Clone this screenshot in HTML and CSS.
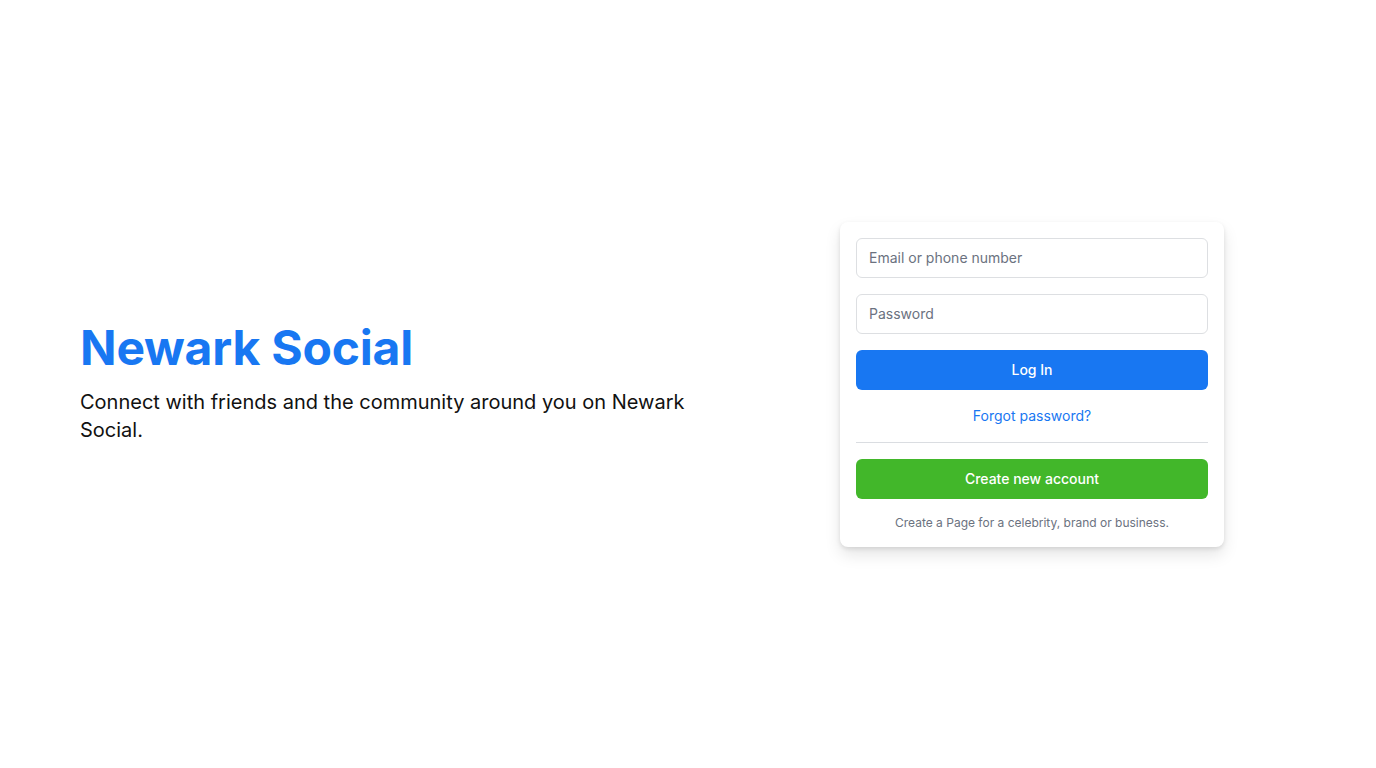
FILE: index.html
```html
<!DOCTYPE html>
<html lang="en">
<head>
<meta charset="utf-8">
<title>Newark Social</title>
<link rel="stylesheet" href="styles.css">
</head>
<body>
<main class="page">
  <section class="intro">
    <h1 class="brand">Newark Social</h1>
    <p class="tagline">Connect with friends and the community around you on Newark Social.</p>
  </section>
  <section class="card">
    <form class="login-form">
      <input class="field" type="text" placeholder="Email or phone number">
      <input class="field" type="password" placeholder="Password">
      <button class="btn btn-primary" type="button">Log In</button>
      <a class="forgot" href="#">Forgot password?</a>
      <hr class="divider">
      <button class="btn btn-success" type="button">Create new account</button>
      <p class="footnote">Create a Page for a celebrity, brand or business.</p>
    </form>
  </section>
</main>
</body>
</html>
```

FILE: styles.css
```css
* { box-sizing: border-box; }
html, body { margin: 0; padding: 0; background: #ffffff; }
body { font-family: Inter, "Noto Sans", sans-serif; color: #1c1e21; }

.page {
  min-height: 100vh;
  display: flex;
  align-items: center;
  padding: 0 80px;
  gap: 120px;
}

.intro { width: 640px; }
.brand {
  margin: 0;
  font-size: 48px;
  font-weight: 700;
  color: #1877f2;
  line-height: 1;
  letter-spacing: -0.2px;
}
.tagline {
  margin: 16px 0 0;
  font-size: 20px;
  line-height: 28px;
  color: #111111;
  max-width: 620px;
}

.card {
  width: 384px;
  background: #fff;
  border-radius: 8px;
  box-shadow: 0 2px 4px rgba(0,0,0,0.1), 0 8px 16px rgba(0,0,0,0.1);
  padding: 16px;
}
.login-form {
  display: flex;
  flex-direction: column;
  gap: 16px;
}
.field {
  height: 40px;
  border: 1px solid #dddfe2;
  border-radius: 6px;
  padding: 0 12px;
  font-family: inherit;
  font-size: 14px;
  color: #1c1e21;
  outline: none;
}
.field::placeholder { color: #6b7280; }
.btn {
  height: 40px;
  border: none;
  border-radius: 6px;
  font-family: inherit;
  font-size: 14px;
  font-weight: 500;
  color: #fff;
  cursor: pointer;
}
.btn-primary { background: #1877f2; }
.btn-success { background: #42b72a; }
.forgot {
  text-align: center;
  color: #1877f2;
  font-size: 14px;
  line-height: 20px;
  text-decoration: none;
}
.divider {
  margin: 0;
  border: none;
  border-top: 1px solid #dadde1;
  height: 0;
}
.footnote {
  margin: 0;
  text-align: center;
  font-size: 12px;
  line-height: 16px;
  color: #6b7280;
}
```
